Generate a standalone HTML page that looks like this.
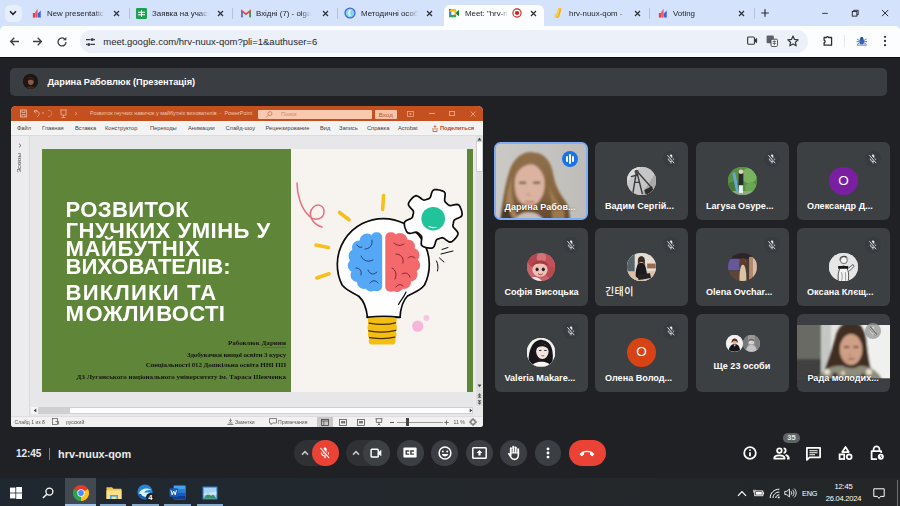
<!DOCTYPE html>
<html lang="uk">
<head>
<meta charset="utf-8">
<title>Meet</title>
<style>
*{box-sizing:border-box;margin:0;padding:0}
html,body{width:900px;height:506px;overflow:hidden;background:#202124;font-family:"Liberation Sans","Noto Sans CJK KR",sans-serif}
body{position:relative}
.a{position:absolute}
svg{position:absolute;overflow:visible}
#tabs{left:0;top:0;width:900px;height:32px;background:#d5e2fb}
#toolbar{left:0;top:26px;width:900px;height:31px;background:#fcfdfe;border-radius:5px 5px 0 0}
#omni{left:80px;top:30px;width:728px;height:23px;border-radius:12px;background:#ebf0f9}
.tt{position:absolute;top:7.7px;height:12px;font-size:7.9px;-webkit-mask-image:linear-gradient(90deg,#000 82%,transparent 100%);color:#22262c;line-height:12px;white-space:nowrap;overflow:hidden}
.tx{position:absolute;top:8.6px;width:9px;height:9px}
.sep{position:absolute;top:8px;width:1px;height:11px;background:#b5c3dd}
#activetab{left:444px;top:4.5px;width:100px;height:22.5px;background:#fcfdfe;border-radius:6px 6px 0 0}
#meet{left:0;top:57px;width:900px;height:421px;background:#202124}
#pbar{left:10px;top:68px;width:877px;height:28px;border-radius:5px;background:#3a3d41;color:#fff;font-size:9.25px;font-weight:bold;line-height:28px}
.tile{position:absolute;width:93px;height:78px;border-radius:6px;background:#3c4043;overflow:hidden}
.nm{position:absolute;left:10px;top:58px;color:#fff;font-size:9.1px;font-weight:bold;white-space:nowrap;line-height:12px}
.av{position:absolute;left:32.2px;top:24.5px;width:28.8px;height:28.8px;border-radius:50%;overflow:hidden}
.mic{position:absolute;left:68px;top:9px;width:16px;height:16px;border-radius:50%;background:#383b3f}
#taskbar{left:0;top:477.5px;width:900px;height:29px;background:linear-gradient(90deg,#1f2730 0,#21282f 25%,#23282c 50%,#242628 100%)}
.btn{position:absolute;top:440px;width:26px;height:26px;border-radius:13px;background:#3b3e42}
.pm{position:absolute;top:122px;font-size:5.7px;color:#3d3d3d;line-height:12px;white-space:nowrap}
.st{position:absolute;top:416px;font-size:5.1px;color:#555;line-height:11px;white-space:nowrap}
.tl{position:absolute;left:67px;color:#fff;font-weight:bold;font-size:22.1px;line-height:22px;white-space:nowrap;transform-origin:0 0}
.sub{position:absolute;right:0;font-family:"Liberation Serif",serif;font-weight:bold;font-size:7px;color:#15170f;line-height:10px;white-space:nowrap;text-align:right}
</style>
</head>
<body>
<!-- ===== Chrome tab strip ===== -->
<div class="a" id="tabs"></div>
<div class="a" id="activetab"></div>
<div class="a" id="toolbar"></div>
<div class="a" id="omni"></div>
<!--TABS-BEGIN-->
<!-- chevron search-tabs button -->
<div class="a" style="left:4.5px;top:4.5px;width:17.5px;height:17px;border-radius:5.5px;background:#e7eefc"></div>
<svg style="left:9.3px;top:10.3px" width="8" height="6" viewBox="0 0 8 6"><path d="M1 1.2 L4 4.3 L7 1.2" fill="none" stroke="#1f2329" stroke-width="1.5"/></svg>
<!-- tab 1 -->
<svg style="left:31.5px;top:8.2px" width="10" height="10" viewBox="0 0 11 12"><rect x="0.5" y="6" width="2.6" height="5.5" fill="#e8443a"/><path d="M3.3 11.5 L3.3 5 L6.2 0.5 L6.2 11.5Z" fill="#f0566b"/><path d="M6.4 11.5 L6.4 6.5 L10 3 L10 11.5Z" fill="#3a63e0"/></svg>
<div class="tt" style="left:47px;width:58px">New presentatic</div>
<svg class="tx" style="left:112px" viewBox="0 0 9 9"><path d="M2 2 L7 7 M7 2 L2 7" stroke="#2b2f36" stroke-width="1.2"/></svg>
<div class="sep" style="left:129px"></div>
<!-- tab 2 -->
<svg style="left:136px;top:8px" width="11" height="11" viewBox="0 0 11 11"><rect width="11" height="11" rx="1.3" fill="#1ea152"/><path d="M2 4.2 H9 M2 6.8 H9 M5.5 2 V9" stroke="#fff" stroke-width="1.1"/></svg>
<div class="tt" style="left:152px;width:57px">Заявка на участ</div>
<svg class="tx" style="left:216px" viewBox="0 0 9 9"><path d="M2 2 L7 7 M7 2 L2 7" stroke="#2b2f36" stroke-width="1.2"/></svg>
<div class="sep" style="left:232px"></div>
<!-- tab 3 gmail -->
<svg style="left:240.6px;top:9.6px" width="10" height="7.6" viewBox="0 0 11 9"><path d="M0.6 8.5 V1 L5.5 5 L10.4 1 V8.5" fill="none" stroke="#e5433b" stroke-width="1.9"/><path d="M0.6 8.5 V2.5" stroke="#3f7de8" stroke-width="1.9"/><path d="M10.4 8.5 V2.5" stroke="#2fa24f" stroke-width="1.9"/></svg>
<div class="tt" style="left:256px;width:55px">Вхідні (7) - olga</div>
<svg class="tx" style="left:320.5px" viewBox="0 0 9 9"><path d="M2 2 L7 7 M7 2 L2 7" stroke="#2b2f36" stroke-width="1.2"/></svg>
<div class="sep" style="left:337px"></div>
<!-- tab 4 -->
<svg style="left:344px;top:7px" width="12" height="12" viewBox="0 0 12 12"><circle cx="6" cy="6" r="5.6" fill="#4a63e6"/><circle cx="6" cy="6" r="4.3" fill="#7fd8ee"/><path d="M6.8 3.2 C4.5 3.6 4 7.8 6.6 8.6" fill="none" stroke="#fff" stroke-width="1.4"/></svg>
<div class="tt" style="left:361px;width:57px">Методичні особ</div>
<svg class="tx" style="left:424.5px" viewBox="0 0 9 9"><path d="M2 2 L7 7 M7 2 L2 7" stroke="#2b2f36" stroke-width="1.2"/></svg>
<!-- active tab 5 -->
<svg style="left:449.3px;top:8.9px" width="10" height="8.4" viewBox="0 0 12 10"><rect x="0" y="0" width="8.6" height="10" rx="1.4" fill="#fbbc04"/><path d="M0 3 L3 0 H0Z" fill="#ea4335"/><rect x="0" y="3" width="3" height="4.5" fill="#4285f4"/><rect x="0" y="7" width="8.6" height="3" rx="1" fill="#34a853"/><rect x="3" y="3" width="3.6" height="4" fill="#fff"/><path d="M8.6 4 L12 1.2 V8.8 L8.6 6Z" fill="#188038"/></svg>
<div class="tt" style="left:465px;width:43px">Meet: "hrv-n</div>
<svg style="left:512px;top:8px" width="10" height="10" viewBox="0 0 10 10"><circle cx="5" cy="5" r="4.1" fill="none" stroke="#c5221f" stroke-width="1.1"/><circle cx="5" cy="5" r="2.1" fill="#c5221f"/></svg>
<svg class="tx" style="left:528.5px" viewBox="0 0 9 9"><path d="M2 2 L7 7 M7 2 L2 7" stroke="#2b2f36" stroke-width="1.2"/></svg>
<!-- tab 6 -->
<svg style="left:553px;top:7px" width="10" height="12" viewBox="0 0 10 12"><path d="M5.2 0.8 L8.6 1.6 L6.4 9.5 C5.6 11.8 1.2 11.2 1.6 8.6 C1.8 6.8 4 6.6 4.4 6.6Z" fill="#f4b31a"/><path d="M5.2 0.8 L6.8 1.2 L5 8.8 C4.4 10.2 2.2 10.2 1.7 9.2 C1.6 7 4 6.6 4.4 6.6Z" fill="#f9cf4a"/></svg>
<div class="tt" style="left:569px;width:58px">hrv-nuux-qom -</div>
<svg class="tx" style="left:632.5px" viewBox="0 0 9 9"><path d="M2 2 L7 7 M7 2 L2 7" stroke="#2b2f36" stroke-width="1.2"/></svg>
<div class="sep" style="left:649px"></div>
<!-- tab 7 -->
<svg style="left:657.5px;top:8.2px" width="10" height="10" viewBox="0 0 11 12"><rect x="0.5" y="6" width="2.6" height="5.5" fill="#e8443a"/><path d="M3.3 11.5 L3.3 5 L6.2 0.5 L6.2 11.5Z" fill="#f0566b"/><path d="M6.4 11.5 L6.4 6.5 L10 3 L10 11.5Z" fill="#3a63e0"/></svg>
<div class="tt" style="left:673px;width:40px">Voting</div>
<svg class="tx" style="left:736.5px" viewBox="0 0 9 9"><path d="M2 2 L7 7 M7 2 L2 7" stroke="#2b2f36" stroke-width="1.2"/></svg>
<div class="sep" style="left:753.5px"></div>
<svg style="left:760px;top:8px" width="10" height="10" viewBox="0 0 10 10"><path d="M5 1.2 V8.8 M1.2 5 H8.8" stroke="#2b2f36" stroke-width="1.2"/></svg>
<!-- window controls -->
<svg style="left:821px;top:9px" width="8" height="8" viewBox="0 0 10 10"><path d="M1.5 5.5 H8.5" stroke="#23272d" stroke-width="1.1"/></svg>
<svg style="left:850.6px;top:8.6px" width="8.4" height="8.4" viewBox="0 0 10 10"><rect x="1.5" y="3" width="5.5" height="5.5" fill="none" stroke="#23272d" stroke-width="1.1"/><path d="M3.2 3 V1.5 H8.6 V6.8 H7" fill="none" stroke="#23272d" stroke-width="1.1"/></svg>
<svg style="left:880.8px;top:9px" width="8.2" height="8.2" viewBox="0 0 10 10"><path d="M1.3 1.3 L8.7 8.7 M8.7 1.3 L1.3 8.7" stroke="#23272d" stroke-width="1.2"/></svg>
<!-- toolbar nav -->
<svg style="left:9px;top:36px" width="11" height="11" viewBox="0 0 11 11"><path d="M10 5.5 H1.8 M5.3 1.8 L1.6 5.5 L5.3 9.2" fill="none" stroke="#3b3f45" stroke-width="1.3"/></svg>
<svg style="left:32px;top:36px" width="11" height="11" viewBox="0 0 11 11"><path d="M1 5.5 H9.2 M5.7 1.8 L9.4 5.5 L5.7 9.2" fill="none" stroke="#3b3f45" stroke-width="1.3"/></svg>
<svg style="left:56px;top:35.5px" width="12" height="12" viewBox="0 0 12 12"><path d="M10 6 A4 4 0 1 1 8.6 2.9" fill="none" stroke="#3b3f45" stroke-width="1.3"/><path d="M10.3 1 V4.3 H7Z" fill="#3b3f45"/></svg>
<svg style="left:85px;top:36.5px" width="11" height="10" viewBox="0 0 11 10"><path d="M1 2.6 H5.5 M8.6 2.6 H10 M1 7.4 H2.4 M5.5 7.4 H10" stroke="#3b3f45" stroke-width="1.3"/><circle cx="7.2" cy="2.6" r="1.5" fill="#3b3f45"/><circle cx="3.8" cy="7.4" r="1.5" fill="#3b3f45"/></svg>
<div class="a" style="left:103.3px;top:33.7px;font-size:9.5px;color:#24272c;line-height:15px;white-space:nowrap;letter-spacing:0px" id="url">meet.google.com/hrv-nuux-qom?pli=1&amp;authuser=6</div>
<!-- omnibox right icons -->
<svg style="left:746.5px;top:36.4px" width="11" height="9.2" viewBox="0 0 12 10"><rect x="0.7" y="1" width="7.4" height="8" rx="1.2" fill="none" stroke="#33373d" stroke-width="1.2"/><path d="M8.2 4 L11 2 V8 L8.2 6Z" fill="#33373d"/></svg>
<svg style="left:766px;top:35px" width="12" height="12" viewBox="0 0 12 12"><rect x="0.6" y="0.6" width="7.2" height="7.6" rx="1" fill="#5b6068"/><rect x="5" y="4.2" width="6.4" height="7.2" rx="1" fill="#fff" stroke="#444a52" stroke-width="1"/><path d="M6.6 6.4 H10 M6.6 8.4 H10 M8.3 5.5 V10" stroke="#444a52" stroke-width=".8"/></svg>
<svg style="left:787px;top:35px" width="12" height="12" viewBox="0 0 12 12"><path d="M6 1 L7.5 4.4 L11.2 4.8 L8.4 7.2 L9.2 10.8 L6 8.9 L2.8 10.8 L3.6 7.2 L0.8 4.8 L4.5 4.4Z" fill="none" stroke="#33373d" stroke-width="1.2" stroke-linejoin="round"/></svg>
<svg style="left:821.5px;top:35.3px" width="11.5" height="11.5" viewBox="0 0 12 12"><path d="M2.2 2.6 H4.6 C4.6 1.4 7 1.4 7 2.6 H10 V10.6 H2.2 V8 C3.6 8 3.6 5.6 2.2 5.6Z" fill="none" stroke="#2b2f35" stroke-width="1.35" stroke-linejoin="round"/></svg>
<div class="a" style="left:844px;top:35px;width:1px;height:12px;background:#e1e6ef"></div>
<svg style="left:855.5px;top:36px" width="11.5" height="10" viewBox="0 0 14 12"><ellipse cx="7" cy="6.6" rx="3" ry="3.6" fill="#3a63b8"/><circle cx="7" cy="2.8" r="1.9" fill="#2c4f9e"/><path d="M1 3.5 L4.4 5.4 M13 3.5 L9.6 5.4 M1.2 10.2 L4.4 8 M12.8 10.2 L9.6 8 M0.6 6.8 H4 M13.4 6.8 H10" stroke="#4a74c9" stroke-width="1.1"/><path d="M1 11 H13" stroke="#3a63b8" stroke-width="1"/></svg>
<svg style="left:883px;top:35px" width="4" height="12" viewBox="0 0 4 12"><circle cx="2" cy="1.8" r="1.15" fill="#33373d"/><circle cx="2" cy="6" r="1.15" fill="#33373d"/><circle cx="2" cy="10.2" r="1.15" fill="#33373d"/></svg>
<!--TABS-END-->
<!-- ===== Meet ===== -->
<div class="a" id="meet"></div>
<div class="a" style="left:0;top:56.6px;width:900px;height:1.6px;background:#0b0b0c"></div>
<div class="a" id="pbar"><div class="a" style="left:12.5px;top:6.3px;width:15px;height:15px;border-radius:50%;overflow:hidden;background:#1b1512"><svg width="15" height="15" viewBox="0 0 16.5 16.5" style="left:0;top:0"><rect width="16.5" height="16.5" fill="#1d1613"/><ellipse cx="8.6" cy="8" rx="3.2" ry="4.2" fill="#8a5a45"/><path d="M4.6 9 C4 2 13 2 12.4 9 C11.4 5.4 5.8 5.4 4.6 9Z" fill="#2a1a14"/><path d="M3 16.5 C4 12.5 13 12.5 14 16.5Z" fill="#3a2a24"/></svg></div><span class="a" style="left:37.5px;top:0">Дарина Рабовлюк (Презентація)</span></div>
<!--PPT-BEGIN-->
<div class="a" id="ppt" style="left:10.5px;top:106px;width:472.5px;height:321px;border-radius:5px 5px 3px 3px;background:#e7e7e9;overflow:hidden"><div class="a" style="left:0;top:0;width:472.5px;height:321px;filter:blur(.35px)">
  <!-- title bar -->
  <div class="a" style="left:0;top:0;width:473px;height:14.5px;background:#c4501f"></div>
  <svg style="left:9px;top:3px" width="60" height="9" viewBox="0 0 60 9" fill="none" stroke="#eab299" stroke-width="0.85"><rect x="0.5" y="1" width="6" height="7"/><path d="M2 1 V3.5 H5 V1 M2 8 V5.5 H5 V8"/><path d="M14 2 L16 4.5 M14 2 L17 1.6 M14 2 C19 1 21 5 17 8"/><path d="M22 4 H24"/><path d="M28 1.5 C33 0.5 33 8 28 7.5" stroke="#d98763"/><path d="M40 1 H47 M41 1.5 V6 H46 V1.5 M43.5 6 V8 M41.5 8.5 H45.5"/><path d="M55 3 L57 4.5 L55 6" stroke="#e4a282"/></svg>
  <div class="a" style="left:79.5px;top:1.5px;font-size:5.45px;line-height:11px;color:#efc4ae;white-space:nowrap" id="ptitle">Розвиток гнучких навичок у майбутніх вихователів&nbsp; -&nbsp; PowerPoint</div>
  <div class="a" style="left:247.5px;top:3.5px;width:113.5px;height:9px;background:#f9c9b0;border-radius:1px"></div>
  <svg style="left:254px;top:5px" width="8" height="7" viewBox="0 0 8 7"><circle cx="5" cy="2.6" r="2" fill="none" stroke="#c57a5a" stroke-width=".8"/><path d="M3.5 4 L0.8 6.5" stroke="#c57a5a" stroke-width=".8"/></svg>
  <div class="a" style="left:270.5px;top:2.5px;font-size:5.6px;line-height:11px;color:#cf8a6c">Поиск</div>
  <div class="a" style="left:364.5px;top:3.5px;width:21.5px;height:9px;background:#f6c3a8;border-radius:1px;font-size:6.2px;line-height:9px;color:#b85a34;text-align:center">Вход</div>
  <svg style="left:396px;top:4.7px" width="7" height="6" viewBox="0 0 7 6"><rect x="0.5" y="0.5" width="6" height="5" fill="none" stroke="#e9a98b" stroke-width=".8"/><path d="M2 3 H5 M3.5 1.8 V4.2" stroke="#e9a98b" stroke-width=".7"/></svg>
  <div class="a" style="left:418.5px;top:7.3px;width:5.5px;height:.9px;background:#e6a283"></div>
  <div class="a" style="left:438.8px;top:5px;width:5.6px;height:5px;border:.8px solid #e6a283"></div>
  <svg style="left:459.8px;top:4.7px" width="6" height="6" viewBox="0 0 6 6"><path d="M0.5 0.5 L5.5 5.5 M5.5 0.5 L0.5 5.5" stroke="#ecb096" stroke-width=".8"/></svg>
  <!-- menu bar -->
  <div class="a" style="left:0;top:14.5px;width:473px;height:15px;background:#f4f3f3;border-bottom:1px solid #dcdcdc"></div>
  <div class="pm" style="left:6.5px;top:16.1px">Файл</div>
  <div class="pm" style="left:31.5px;top:16.1px">Главная</div>
  <div class="pm" style="left:64.5px;top:16.1px">Вставка</div>
  <div class="pm" style="left:94.5px;top:16.1px">Конструктор</div>
  <div class="pm" style="left:139.5px;top:16.1px">Переходы</div>
  <div class="pm" style="left:177.5px;top:16.1px">Анимации</div>
  <div class="pm" style="left:215px;top:16.1px">Слайд-шоу</div>
  <div class="pm" style="left:255px;top:16.1px">Рецензирование</div>
  <div class="pm" style="left:309.5px;top:16.1px">Вид</div>
  <div class="pm" style="left:328.5px;top:16.1px">Запись</div>
  <div class="pm" style="left:356.5px;top:16.1px">Справка</div>
  <div class="pm" style="left:387.5px;top:16.1px">Acrobat</div>
  <svg style="left:421.5px;top:19px" width="6" height="7" viewBox="0 0 6 7"><path d="M1 3 V6.5 H5 V3 M3 4.5 V0.8 M1.6 2 L3 0.6 L4.4 2" fill="none" stroke="#c0522c" stroke-width=".8"/></svg>
  <div class="pm" style="left:429.5px;top:16.1px;color:#b7472a;font-weight:bold">Поделиться</div>
  <!-- left thumbnail pane -->
  <div class="a" style="left:0;top:30px;width:19.5px;height:280px;background:#ecebee;border-right:1px solid #dcdbde"></div>
  <svg style="left:7px;top:37px" width="4" height="5" viewBox="0 0 4 5"><path d="M1 0.7 L3 2.5 L1 4.3" fill="none" stroke="#555" stroke-width=".8"/></svg>
  <div class="a" style="left:-3.5px;top:51px;width:24px;height:12px;font-size:5.8px;line-height:12px;color:#444;text-align:center;transform:rotate(-90deg);white-space:nowrap">Эскизы</div>
  <!-- slide -->
  <div class="a" id="slide" style="left:31.5px;top:43.1px;width:431px;height:242.7px;background:#5f8638;overflow:hidden">
    <div class="a" style="left:248.5px;top:0;width:176px;height:243px;background:#f7f4f0"></div>
    <div class="tl" id="l1" style="left:23.6px;top:50.4px;letter-spacing:.32px">РОЗВИТОК</div>
    <div class="tl" id="l2" style="left:23.6px;top:70.6px;letter-spacing:.48px">ГНУЧКИХ УМІНЬ У</div>
    <div class="tl" id="l3" style="left:23.6px;top:88.7px;letter-spacing:.56px">МАЙБУТНІХ</div>
    <div class="tl" id="l4" style="left:23.6px;top:107.3px;letter-spacing:-.1px">ВИХОВАТЕЛІВ:</div>
    <div class="tl" id="l5" style="left:23.6px;top:132.5px;letter-spacing:1.15px">ВИКЛИКИ ТА</div>
    <div class="tl" id="l6" style="left:23.6px;top:153.5px;letter-spacing:.3px">М<span style="margin-left:1.2px">ОЖЛИ</span><span style="margin-left:1.2px">ВОСТІ</span></div>
    <div class="sub" style="right:187px;top:189.4px;letter-spacing:.03px"><span style="text-decoration:none">Рабовлюк <span style="border-bottom:.6px solid #c0392b">Дарини</span></span></div>
    <div class="sub" style="right:187px;top:201.2px;letter-spacing:-.15px">Здобувачки вищої освіти 3 курсу</div>
    <div class="sub" style="right:187px;top:211.2px;letter-spacing:-.09px">Спеціальності 012 Дошкільна освіта ННІ ПП</div>
    <div class="sub" style="right:187px;top:223.2px">ДЗ Луганського національного університету ім. Тараса Шевченка</div>
    <!--ART-BEGIN-->
<svg style="left:-42px;top:-149.1px" width="480" height="400" viewBox="0 0 480 400" fill="none" stroke-linecap="round" stroke-linejoin="round">
<path d="M297 183 C297 195 301 208 309 216 C315 222 324 219 324 211.5 C324 205 317 203 313 207.5 C307 214 312 224 322 227" stroke="#ea6f7c" stroke-width="1.5"/>
<path d="M383.6 195.5 L382.6 209.5" stroke="#f6bf1c" stroke-width="3.6"/>
<path d="M339.5 212.5 L349 219.8" stroke="#f6bf1c" stroke-width="3.6"/>
<path d="M316 245 L328.5 247.6" stroke="#f6bf1c" stroke-width="3.6"/>
<path d="M316.8 278 L329 273.8" stroke="#f6bf1c" stroke-width="3.6"/>
<path d="M367.5 317.5 C366.5 308 364 301 359 296.5 C355 293 348 292 342.1 285 A46 46 0 1 1 424.5 285 C419 292 412 293 407.5 296 C402.5 301 400.5 308 400 317.5 Z" fill="#fff" stroke="#0c0c0c" stroke-width="1.7"/>
<g fill="#55a8f6"><rect x="371" y="232.3" width="11.2" height="59" rx="5"/><circle cx="367" cy="241" r="7.5"/><circle cx="359" cy="247.5" r="7"/><circle cx="355.5" cy="256" r="7"/><circle cx="355" cy="265.5" r="7.2"/><circle cx="357.5" cy="275" r="7"/><circle cx="364" cy="282" r="7"/><circle cx="371" cy="285" r="6.5"/><rect x="358" y="245" width="20" height="38"/></g>
<g fill="#f4696b"><rect x="385.3" y="232.3" width="11.2" height="59.5" rx="5"/><circle cx="400" cy="240.5" r="7.5"/><circle cx="408" cy="246.5" r="7"/><circle cx="412.5" cy="255" r="7"/><circle cx="413" cy="265" r="7.2"/><circle cx="410.5" cy="274.5" r="7"/><circle cx="404" cy="282" r="7"/><circle cx="397" cy="285.5" r="6.5"/><rect x="390" y="245" width="20" height="38"/></g>
<g stroke="#22356b" stroke-width="0.9"><path d="M372 240 C373 246 369 249 365 249"/><path d="M361 256 C364 262 369 262 373 260"/><path d="M356 268 C360 268 362 271 361 275"/><path d="M368 270 C370 275 374 275 377 272"/><path d="M370 283 C372 280 376 280 378 283"/><path d="M357 245 C358 247 360 248 362 247"/></g>
<g stroke="#7a1f28" stroke-width="0.9"><path d="M394 243 C397 246 401 246 404 244"/><path d="M396 254 C401 254 404 258 403 263"/><path d="M408 258 C410 256 413 256 415 258"/><path d="M392 268 C396 270 397 275 395 279"/><path d="M402 274 C405 272 409 273 410 277"/><path d="M396 287 C398 284 401 284 403 286"/></g>
<path d="M406 292 C404 297 401 300 398.5 304.5" stroke="#0c0c0c" stroke-width="1.2"/>
<path d="M456.1 218.9 L454.8 219.7 L454.1 220.4 L453.8 221.1 L453.6 221.8 L453.5 222.5 L453.3 223.2 L453.2 223.9 L453.0 224.6 L452.9 225.3 L452.9 226.1 L453.2 227.0 L454.2 228.2 L455.8 229.9 L457.4 231.8 L458.0 233.2 L457.9 234.4 L457.6 235.3 L457.0 236.2 L456.4 237.1 L455.8 237.9 L455.1 238.6 L454.4 239.4 L453.7 240.1 L452.9 240.8 L452.1 241.4 L451.2 241.9 L450.0 242.1 L448.5 241.6 L446.5 240.3 L444.7 238.8 L443.3 238.0 L442.4 237.7 L441.6 237.8 L440.9 238.0 L440.2 238.2 L439.6 238.5 L438.9 238.7 L438.2 238.9 L437.5 239.2 L436.8 239.5 L436.2 240.3 L435.6 241.7 L435.0 244.0 L434.2 246.3 L433.2 247.5 L432.2 248.1 L431.2 248.2 L430.1 248.2 L429.1 248.1 L428.1 247.9 L427.1 247.8 L426.1 247.5 L425.1 247.2 L424.1 246.9 L423.2 246.5 L422.3 246.0 L421.5 245.1 L421.2 243.5 L421.4 241.1 L421.7 238.8 L421.8 237.2 L421.5 236.3 L421.0 235.7 L420.5 235.1 L420.0 234.7 L419.4 234.2 L418.9 233.7 L418.4 233.2 L417.8 232.8 L417.1 232.4 L416.2 232.2 L414.6 232.4 L412.3 233.0 L410.0 233.4 L408.4 233.2 L407.4 232.6 L406.8 231.8 L406.3 230.9 L405.9 229.9 L405.5 229.0 L405.1 228.0 L404.8 227.0 L404.6 226.0 L404.4 225.0 L404.3 224.0 L404.3 223.0 L404.7 221.9 L405.9 220.8 L408.0 219.8 L410.3 218.9 L411.6 218.1 L412.3 217.4 L412.6 216.7 L412.8 216.0 L412.9 215.3 L413.1 214.6 L413.2 213.9 L413.4 213.2 L413.5 212.5 L413.5 211.7 L413.2 210.8 L412.2 209.6 L410.6 207.9 L409.0 206.0 L408.4 204.6 L408.5 203.4 L408.8 202.5 L409.4 201.6 L410.0 200.7 L410.6 199.9 L411.3 199.2 L412.0 198.4 L412.7 197.7 L413.5 197.0 L414.3 196.4 L415.2 195.9 L416.4 195.7 L417.9 196.2 L419.9 197.5 L421.7 199.0 L423.1 199.8 L424.0 200.1 L424.8 200.0 L425.5 199.8 L426.2 199.6 L426.8 199.3 L427.5 199.1 L428.2 198.9 L428.9 198.6 L429.6 198.3 L430.2 197.5 L430.8 196.1 L431.4 193.8 L432.2 191.5 L433.2 190.3 L434.2 189.7 L435.2 189.6 L436.3 189.6 L437.3 189.7 L438.3 189.9 L439.3 190.0 L440.3 190.3 L441.3 190.6 L442.3 190.9 L443.2 191.3 L444.1 191.8 L444.9 192.7 L445.2 194.3 L445.0 196.7 L444.7 199.0 L444.6 200.6 L444.9 201.5 L445.4 202.1 L445.9 202.7 L446.4 203.1 L447.0 203.6 L447.5 204.1 L448.0 204.6 L448.6 205.0 L449.3 205.4 L450.2 205.6 L451.8 205.4 L454.1 204.8 L456.4 204.4 L458.0 204.6 L459.0 205.2 L459.6 206.0 L460.1 206.9 L460.5 207.9 L460.9 208.8 L461.3 209.8 L461.6 210.8 L461.8 211.8 L462.0 212.8 L462.1 213.8 L462.1 214.8 L461.7 215.9 L460.5 217.0 L458.4 218.0Z" fill="#fff" stroke="#0c0c0c" stroke-width="1.7"/>
<circle cx="433.2" cy="218.7" r="11.8" fill="#20c39a"/>
<path d="M429 226.5 C431 227.5 434 227.8 436 227.3" stroke="#e9fff8" stroke-width="1.1"/>
<g stroke="#0c0c0c" stroke-width="1"><path d="M442 249.5 L448 247.5"/><path d="M441 254 L453 251"/><path d="M439.5 258 L444 262"/><path d="M436.5 261 C438 264 438.5 268 437.5 271"/></g>
<g fill="#f4bd12" stroke="none"><rect x="368" y="317" width="28.6" height="7.4" rx="3"/><rect x="367.6" y="323.6" width="29.2" height="8" rx="3.2"/><rect x="368" y="330.8" width="28.4" height="7.6" rx="3.2"/><rect x="368.8" y="337.4" width="26.6" height="7.2" rx="3.4"/><rect x="369" y="320" width="26.4" height="21"/></g>
<g stroke="#4a3006" stroke-width="1.25"><path d="M369 323.2 C378 324.8 388 324.8 395.6 322.8"/><path d="M368.6 330.8 C378 332.4 388 332.4 395.8 330.4"/><path d="M369.6 337.6 C378 338.8 388 338.8 394.8 337.2"/></g>
<path d="M367 317.3 C378 316 390 316 400.3 317.3" stroke="#0c0c0c" stroke-width="1.6"/>
<circle cx="417.7" cy="326.2" r="5.6" fill="#f7b6d8"/>
<circle cx="426.4" cy="318" r="2.9" fill="#f9c4df"/>
</svg>
<!--ART-END-->
  </div>
  <!-- vertical scrollbar -->
  <div class="a" style="left:462.5px;top:30px;width:10px;height:280px;background:#e9e9ea"></div>
  <div class="a" style="left:465.5px;top:30px;width:7px;height:270px;background:#dfdfe0"></div>
  <div class="a" style="left:465.7px;top:35px;width:6.6px;height:31px;background:#fdfdfd;border:0.5px solid #cfcfcf"></div>
  <svg style="left:466.5px;top:31px" width="5" height="4" viewBox="0 0 5 4"><path d="M0.5 3.5 L2.5 0.8 L4.5 3.5Z" fill="#444"/></svg>
  <svg style="left:466.5px;top:277.5px" width="5" height="4" viewBox="0 0 5 4"><path d="M0.5 0.5 L2.5 3.2 L4.5 0.5Z" fill="#444"/></svg>
  <svg style="left:466.5px;top:286.5px" width="5" height="5" viewBox="0 0 5 5"><path d="M0.5 2.5 L2.5 0.3 L4.5 2.5Z M0.5 4.8 L2.5 2.6 L4.5 4.8Z" fill="#555"/></svg>
  <svg style="left:466.5px;top:293.5px" width="5" height="5" viewBox="0 0 5 5"><path d="M0.5 0.2 L2.5 2.4 L4.5 0.2Z M0.5 2.5 L2.5 4.7 L4.5 2.5Z" fill="#555"/></svg>
  <!-- horizontal scrollbar -->
  <div class="a" style="left:20.5px;top:300.5px;width:442px;height:7.5px;background:#fdfdfd;border:0.5px solid #d0d0d0"></div>
  <div class="a" style="left:20.5px;top:300.5px;width:39px;height:7.5px;background:#cfcfd1"></div>
  <div class="a" style="left:20.5px;top:300.5px;width:7px;height:7.5px;background:#f5f5f5"></div>
  <svg style="left:22.5px;top:302px" width="4" height="5" viewBox="0 0 4 5"><path d="M3.3 0.5 L0.7 2.5 L3.3 4.5Z" fill="#444"/></svg>
  <svg style="left:458.5px;top:302px" width="4" height="5" viewBox="0 0 4 5"><path d="M0.7 0.5 L3.3 2.5 L0.7 4.5Z" fill="#444"/></svg>
  <!-- status bar -->
  <div class="a" style="left:0;top:310px;width:473px;height:11px;background:#f2f1f1;border-top:1px solid #dedede"></div>
  <div class="st" style="left:4px;top:310.5px">Слайд 1 из 8</div>
  <svg style="left:41px;top:312px" width="7" height="7" viewBox="0 0 7 7"><rect x="0.5" y="0.5" width="5" height="6" fill="none" stroke="#555" stroke-width=".7"/><path d="M3.5 3.5 H6.5 V6.5" stroke="#555" stroke-width=".7" fill="none"/></svg>
  <div class="st" style="left:55.5px;top:310.5px">русский</div>
  <svg style="left:216px;top:312px" width="7" height="7" viewBox="0 0 7 7"><path d="M0.5 6.5 H6.5 M1.5 5 H5.5 M3.5 0.5 V3.5 M2.3 2.3 L3.5 3.6 L4.7 2.3" stroke="#555" stroke-width=".7" fill="none"/></svg>
  <div class="st" style="left:224.5px;top:310.5px">Заметки</div>
  <svg style="left:258.5px;top:312px" width="8" height="7" viewBox="0 0 8 7"><path d="M0.5 0.5 H7.5 V5 H3.5 L2 6.6 V5 H0.5Z" stroke="#555" stroke-width=".7" fill="none"/></svg>
  <div class="st" style="left:267.5px;top:310.5px">Примечания</div>
  <div class="a" style="left:306.5px;top:311px;width:16px;height:10px;background:#c9c8c8"></div>
  <svg style="left:310.5px;top:312.5px" width="8" height="7" viewBox="0 0 8 7"><rect x="0.5" y="0.5" width="7" height="6" fill="none" stroke="#444" stroke-width=".8"/><path d="M0.5 2 H7.5 M2.8 2 V6.5" stroke="#444" stroke-width=".7"/></svg>
  <svg style="left:328.5px;top:312.5px" width="8" height="7" viewBox="0 0 8 7"><rect x="0.5" y="0.5" width="7" height="6" fill="none" stroke="#555" stroke-width=".8"/><path d="M2.5 2.5 H3.7 V3.5 H2.5Z M4.6 2.5 H5.8 V3.5 H4.6Z M2.5 4.3 H3.7 M4.6 4.3 H5.8" stroke="#555" stroke-width=".7"/></svg>
  <svg style="left:346.5px;top:312.5px" width="8" height="7" viewBox="0 0 8 7"><rect x="0.5" y="0.5" width="7" height="6" fill="none" stroke="#555" stroke-width=".8"/><rect x="2" y="2" width="4" height="2.4" fill="#777"/></svg>
  <svg style="left:364.5px;top:312px" width="8" height="8" viewBox="0 0 8 8"><path d="M0.5 0.7 H7.5 M1.3 0.7 V4.4 H6.7 V0.7 M4 4.4 V6.6 M2.6 7.4 L4 6 L5.4 7.4" fill="none" stroke="#555" stroke-width=".8"/></svg>
  <div class="a" style="left:379.5px;top:315.5px;width:4px;height:.8px;background:#555"></div>
  <div class="a" style="left:386px;top:315.6px;width:46px;height:.7px;background:#9a9a9a"></div>
  <div class="a" style="left:395.8px;top:312px;width:2.4px;height:7.5px;background:#444"></div>
  <svg style="left:433px;top:313.5px" width="5" height="5" viewBox="0 0 5 5"><path d="M0.3 2.5 H4.7 M2.5 0.3 V4.7" stroke="#555" stroke-width=".8"/></svg>
  <div class="st" style="left:443px;top:310.5px">11 %</div>
  <svg style="left:458.5px;top:312px" width="8" height="8" viewBox="0 0 8 8"><rect x="2" y="2" width="4" height="4" fill="none" stroke="#444" stroke-width=".8"/><path d="M4 0 V2 M4 6 V8 M0 4 H2 M6 4 H8" stroke="#444" stroke-width=".8"/></svg>
</div></div>
<!--PPT-END-->
<!--TILES-BEGIN-->
<svg style="left:0;top:0" width="0" height="0"><defs><g id="micoff"><path d="M8 3.6 C7.2 3.6 6.7 4.2 6.7 4.9 V7.9 C6.7 8.7 7.2 9.2 8 9.2 C8.8 9.2 9.3 8.7 9.3 7.9 V4.9 C9.3 4.2 8.8 3.6 8 3.6Z" fill="#e8eaed"/><path d="M5.3 7.7 C5.3 9.4 6.5 10.5 8 10.5 C9.5 10.5 10.7 9.4 10.7 7.7 M8 10.5 V12.4" fill="none" stroke="#e8eaed" stroke-width=".9"/><path d="M4.6 3.8 L11.6 12" stroke="#383b3f" stroke-width="2.2"/><path d="M4.4 4.2 L11.2 12.2" stroke="#e8eaed" stroke-width=".9"/></g></defs></svg>
<!-- row 1 -->
<div class="tile" style="left:494.3px;top:142.3px;width:93.4px;height:77.6px;background:#c6c4c1;border:2px solid #80aef6;border-radius:6.5px">
  <svg style="left:-2px;top:-2px" width="93.4" height="77.6" viewBox="0 0 93 77"><defs><linearGradient id="bg1" x1="0" y1="0" x2="1" y2="0"><stop offset="0" stop-color="#cbc9c6"/><stop offset=".6" stop-color="#c5c3c0"/><stop offset="1" stop-color="#bebcb9"/></linearGradient><linearGradient id="hr1" x1="0" y1="0" x2="0" y2="1"><stop offset="0" stop-color="#8e6f4b"/><stop offset=".6" stop-color="#86653f"/><stop offset="1" stop-color="#5e452c"/></linearGradient><filter id="bl1"><feGaussianBlur stdDeviation="1.1"/></filter></defs><rect width="93" height="77" fill="url(#bg1)"/><g filter="url(#bl1)"><path d="M6 80 C8 60 11 42 15 30 C19 15 30 9 38 10 C50 10 57 19 59 32 C61 44 66 52 72 60 C75 66 76 72 75 80Z" fill="url(#hr1)"/><path d="M10 77 C12 60 13 46 18 34 C16 50 20 66 24 77Z" fill="#a5825a"/><path d="M54 42 C58 52 64 60 70 68 L70 77 H58 C58 64 56 52 54 42Z" fill="#9a794f"/><ellipse cx="35.5" cy="42" rx="15" ry="21.5" fill="#dcb3a0"/><path d="M20 46 C21 56 26 62 32 64 C26 60 22 54 20 46Z" fill="#c99c88"/><path d="M19 40 C19 20 34 14 38 16 C46 16 52 26 52 40 C48 28 42 22 37 22 C30 22 22 28 19 40Z" fill="#8f6e49"/><path d="M25 40.5 H32 M39 40.5 H46" stroke="#5e483f" stroke-width="2"/><path d="M34 50 L33 53 H37" stroke="#c4937f" stroke-width="1" fill="none"/><path d="M31 59.5 H40" stroke="#b06f68" stroke-width="1.8"/><path d="M20 80 C22 67 46 66 50 80Z" fill="#cbbdb0"/><path d="M6 80 C7 72 10 66 14 62 C15 70 18 76 22 80Z" fill="#4a3826"/></g></svg>
  <div class="a" style="left:65.8px;top:6.6px;width:16.4px;height:16.4px;border-radius:50%;background:#1a73e8"></div>
  <div class="a" style="left:69.9px;top:12px;width:2.2px;height:5.6px;border-radius:1px;background:#fff"></div>
  <div class="a" style="left:72.9px;top:10.1px;width:2.2px;height:9.4px;border-radius:1px;background:#fff"></div>
  <div class="a" style="left:75.9px;top:12px;width:2.2px;height:5.6px;border-radius:1px;background:#fff"></div>
  <div class="nm" style="left:8.2px;top:57.2px;text-shadow:0 0 2px rgba(0,0,0,.6)">Дарина Рабов...</div>
</div>
<div class="tile" style="left:595px;top:142px"><div class="mic"></div><svg class="mi" style="left:68px;top:9px" width="16" height="16" viewBox="0 0 16 16"><use href="#micoff"/></svg>
  <div class="av" style="background:#c4c4c4"><svg width="28.8" height="28.8" viewBox="0 0 30 30" style="left:0;top:0"><rect width="30" height="30" fill="#c6c6c6"/><path d="M30 6 L14 30 H30Z" fill="#a9a9a9"/><path d="M0 0 H14 L0 16Z" fill="#dcdcdc"/><path d="M10 4 L6 28 M10 4 L16 28 M10 4 L26 22 M7.5 16 H13 M4 10 L12 8" stroke="#3c3c3c" stroke-width="1.5" fill="none"/><circle cx="10" cy="5" r="2.2" fill="#4a4a4a"/><path d="M18 24 L26 20 L28 26 L20 30Z" fill="#2e2e2e"/></svg></div>
  <div class="nm">Вадим Сергій...</div></div>
<div class="tile" style="left:696px;top:142px"><div class="mic"></div><svg class="mi" style="left:68px;top:9px" width="16" height="16" viewBox="0 0 16 16"><use href="#micoff"/></svg>
  <div class="av" style="background:#5c8f45"><svg width="28.8" height="28.8" viewBox="0 0 30 30" style="left:0;top:0"><rect width="30" height="30" fill="#579145"/><circle cx="22" cy="9" r="8" fill="#79b361"/><circle cx="24" cy="22" r="6" fill="#6aa753"/><circle cx="6" cy="22" r="7" fill="#467a3a"/><rect x="0" y="25" width="30" height="5" fill="#8fa889"/><path d="M6 6 L10 26" stroke="#67a7d8" stroke-width="3"/><rect x="11" y="5" width="5" height="15" rx="2" fill="#2a2a2e"/><circle cx="13.5" cy="5" r="2.4" fill="#e8cdb8"/><rect x="11.5" y="19" width="4" height="8" fill="#f2f2f2"/></svg></div>
  <div class="nm">Laгysa Osype...</div></div>
<div class="tile" style="left:797px;top:142px"><div class="mic"></div><svg class="mi" style="left:68px;top:9px" width="16" height="16" viewBox="0 0 16 16"><use href="#micoff"/></svg>
  <div class="av" style="background:#7b1fa2;color:#fff;font-size:13.5px;line-height:28.8px;text-align:center">О</div>
  <div class="nm">Олександр Д...</div></div>
<!-- row 2 -->
<div class="tile" style="left:494.5px;top:228px"><div class="mic"></div><svg class="mi" style="left:68px;top:9px" width="16" height="16" viewBox="0 0 16 16"><use href="#micoff"/></svg>
  <div class="av" style="background:#c75a60"><svg width="28.8" height="28.8" viewBox="0 0 30 30" style="left:0;top:0"><rect width="30" height="30" fill="#c9626a"/><circle cx="8" cy="8" r="7" fill="#b3454e"/><circle cx="23" cy="9" r="7.5" fill="#c2525a"/><circle cx="25" cy="20" r="6" fill="#b84a53"/><circle cx="15" cy="5" r="5" fill="#d4737a"/><ellipse cx="13.5" cy="17.5" rx="8" ry="7.2" fill="#efc0b6"/><path d="M5 13 C9 6 20 6 23 14 C18 10 10 10 5 13Z" fill="#a83a44"/><ellipse cx="10.5" cy="17" rx="1.6" ry="2" fill="#2e2024"/><ellipse cx="17" cy="17" rx="1.6" ry="2" fill="#2e2024"/><path d="M11.5 21.5 C13 23 15 23 16.5 21.5" stroke="#8a2e38" stroke-width=".9" fill="none"/><path d="M0 30 C2 24 12 23 16 30Z" fill="#ece6e4"/></svg></div>
  <div class="nm">Софія Висоцька</div></div>
<div class="tile" style="left:595px;top:228px"><div class="mic"></div><svg class="mi" style="left:68px;top:9px" width="16" height="16" viewBox="0 0 16 16"><use href="#micoff"/></svg>
  <div class="av" style="background:#ddd5cc"><svg width="28.8" height="28.8" viewBox="0 0 30 30" style="left:0;top:0"><rect width="30" height="30" fill="#e4ddd5"/><rect x="0" y="0" width="8" height="20" fill="#55626a"/><rect x="21" y="11" width="9" height="5" fill="#9a6a4a"/><rect x="0" y="19" width="30" height="11" fill="#dcc0a8"/><path d="M9 24 C9 14 11.5 10 15 10 C18.5 10 20 14 21 24 C22 28 12 29 9 24Z" fill="#1b1a1e"/><path d="M11 22 L24 21 L25 26 L12 28Z" fill="#222126"/><circle cx="15" cy="7.2" r="3" fill="#e2c2ae"/><path d="M11.4 9 C10.6 1.6 19.4 1.6 18.6 9 L19 13 C18 8 12 8 11 13Z" fill="#3a2a22"/></svg></div>
  <div class="nm" style="font-size:10px;top:57.5px;font-weight:500;letter-spacing:.4px">긴태이</div></div>
<div class="tile" style="left:696px;top:228px"><div class="mic"></div><svg class="mi" style="left:68px;top:9px" width="16" height="16" viewBox="0 0 16 16"><use href="#micoff"/></svg>
  <div class="av" style="background:#4a3a30"><svg width="28.8" height="28.8" viewBox="0 0 30 30" style="left:0;top:0"><rect width="30" height="30" fill="#4c3b30"/><path d="M0 4 H12 V18 H0Z" fill="#66579a"/><path d="M0 0 H30 V6 H0Z" fill="#2c2428"/><rect x="22" y="4" width="8" height="26" fill="#b08a6e"/><rect x="26" y="6" width="4" height="20" fill="#d9b9a8"/><rect x="0" y="19" width="12" height="11" fill="#5d4636"/><path d="M12 30 C11.5 20 13 12 15.5 12 C18 12 19.5 20 19 30Z" fill="#d9c3a6"/><circle cx="15.5" cy="8.8" r="2.8" fill="#d8b49c"/><path d="M12.4 10 C12 4 19 4 18.6 10 L19 15 C18 11 13 11 12 15Z" fill="#5a3c28"/></svg></div>
  <div class="nm">Olena Ovchar...</div></div>
<div class="tile" style="left:797px;top:228px"><div class="mic"></div><svg class="mi" style="left:68px;top:9px" width="16" height="16" viewBox="0 0 16 16"><use href="#micoff"/></svg>
  <div class="av" style="background:#e4e4e4"><svg width="28.8" height="28.8" viewBox="0 0 30 30" style="left:0;top:0"><rect width="30" height="30" fill="#e6e6e6"/><path d="M11 8 C10 2 20 1 20 7 C21 4 14 3 11 8Z" fill="#3a3a3a"/><circle cx="15.5" cy="7.5" r="3.6" fill="#f4f4f4" stroke="#444" stroke-width=".8"/><path d="M10 30 C8.5 22 10.5 14 15 13.5 C19.5 14 21.5 20 20 30" fill="#f3f3f3" stroke="#333" stroke-width=".9"/><rect x="9.5" y="13.6" width="10.5" height="2.8" fill="#151515"/><path d="M20 16 L25 12 L26 14 L21 19" fill="#f0f0f0" stroke="#333" stroke-width=".8"/><path d="M13 20 C14 23 14 26 13 29 M17 20 C17.5 24 17 27 17.5 29" stroke="#555" stroke-width=".6" fill="none"/></svg></div>
  <div class="nm">Оксана Клєщ...</div></div>
<!-- row 3 -->
<div class="tile" style="left:494.5px;top:313.5px"><div class="mic"></div><svg class="mi" style="left:68px;top:9px" width="16" height="16" viewBox="0 0 16 16"><use href="#micoff"/></svg>
  <div class="av" style="background:#f1efee"><svg width="28.8" height="28.8" viewBox="0 0 30 30" style="left:0;top:0"><rect width="30" height="30" fill="#f3f1f0"/><path d="M2 30 C0 10 8 1 16 2 C25 3 29 12 26 30Z" fill="#17151a"/><ellipse cx="16" cy="14" rx="6.5" ry="8" fill="#f2e6e0"/><path d="M9 12 C10 4 22 4 23 13 C20 8 13 7 9 12Z" fill="#17151a"/><path d="M12.5 13 H15 M18 13 H20.5" stroke="#2a2228" stroke-width="1"/><path d="M15 18.5 H18" stroke="#b25a62" stroke-width="1"/><path d="M4 30 C8 23 22 23 26 30Z" fill="#f7f5f4"/></svg></div>
  <div class="nm">Valeria Makare...</div></div>
<div class="tile" style="left:595px;top:313.5px"><div class="mic"></div><svg class="mi" style="left:68px;top:9px" width="16" height="16" viewBox="0 0 16 16"><use href="#micoff"/></svg>
  <div class="av" style="background:#d84315;color:#fff;font-size:13.5px;line-height:28.8px;text-align:center">О</div>
  <div class="nm">Олена Волод...</div></div>
<div class="tile" style="left:696px;top:313.5px">
  <div class="a" style="left:30px;top:21.4px;width:16.8px;height:16.8px;border-radius:50%;overflow:hidden;background:#f1efee"><svg width="16.8" height="16.8" viewBox="0 0 17 17" style="left:0;top:0"><rect width="17" height="17" fill="#f3f1ef"/><path d="M2.5 17 C3 11.5 5.5 9 9 9 C12.5 9 14 12 14.5 17Z" fill="#17161a"/><circle cx="8.8" cy="6.4" r="2.7" fill="#dcae98"/><path d="M5.6 8.6 C4.8 2 12.8 2 12 8.6 C11.4 5 6.4 5 5.6 8.6Z" fill="#5a2f22"/><path d="M7.6 9.5 L8.8 12 L10 9.5Z" fill="#e9d9d0"/></svg></div>
  <div class="a" style="left:47.4px;top:21.4px;width:16.8px;height:16.8px;border-radius:50%;overflow:hidden;background:#8d8d8d"><svg width="16.8" height="16.8" viewBox="0 0 17 17" style="left:0;top:0"><rect width="17" height="17" fill="#9a9a9a"/><rect x="0" y="0" width="5" height="17" fill="#777"/><rect x="12" y="0" width="5" height="17" fill="#808080"/><circle cx="8.5" cy="6.6" r="3" fill="#d2d2d2"/><path d="M3 17 C3 12 5.5 10 8.5 10 C11.5 10 14 12 14 17Z" fill="#c4c4c4"/><path d="M5 8 C4.6 2 12.4 2 12 8 C11 4.8 6 4.8 5 8Z" fill="#6a6a6a"/></svg></div>
  <div class="nm" style="left:17.5px;top:46px">Ще 23 особи</div></div>
<div class="tile" style="left:797px;top:313.5px;background:#3b3e42">
  <svg style="left:0;top:11.4px" width="93" height="53.2" viewBox="0 0 93 53.2"><defs><filter id="bl2"><feGaussianBlur stdDeviation="1"/></filter><clipPath id="cp2"><rect width="93" height="53.2"/></clipPath></defs><g clip-path="url(#cp2)"><rect width="93" height="53.2" fill="#e4e4e2"/><g filter="url(#bl2)"><rect x="-3" y="-3" width="27" height="60" fill="#676a64"/><rect x="-3" y="34" width="28" height="24" fill="#3f413f"/><rect x="24" y="-3" width="10" height="60" fill="#c4c7c3"/><rect x="66" y="-3" width="30" height="60" fill="#f0f0ee"/><path d="M24 56 C28 42 34 28 38 14 C40 3 46 -3 54 -3 C63 -3 68 3 69.5 14 C71 30 73 44 78 56Z" fill="#3f2d23"/><ellipse cx="54" cy="24.5" rx="11.3" ry="15.5" fill="#cf9f86"/><path d="M43 24 C45 34 50 40 54 40 C49 37 45 32 43 24Z" fill="#b98a73"/><path d="M42 22 C42 4 66 4 66 22 C63 11 58 8 55 8 C50 8 45 12 42 22Z" fill="#3a281f"/><path d="M47 22 H52.2 M56.4 22 H61.4" stroke="#4a342b" stroke-width="1.6"/><path d="M52.6 28 L52 30.4 H55" stroke="#b58772" stroke-width=".9" fill="none"/><path d="M51 34 H57.5" stroke="#9c5d57" stroke-width="1.5"/><path d="M20 56 C24 44 36 40 46 41 C52 44 58 44 62 41 C72 40 82 46 86 56Z" fill="#8e8c7a"/><circle cx="30" cy="47" r="3" fill="#e6e0d0"/><circle cx="38" cy="50" r="2.5" fill="#3b3a33"/><circle cx="72" cy="47" r="3" fill="#e6e0d0"/><circle cx="66" cy="51" r="2.4" fill="#4a4840"/><circle cx="46" cy="48" r="2.2" fill="#d9cbb6"/></g></g></svg>
  <div class="a" style="left:67.5px;top:9px;width:16.5px;height:16.5px;border-radius:50%;background:rgba(150,150,150,.75)"></div><svg class="mi" style="left:67.7px;top:9.2px;opacity:.55" width="16" height="16" viewBox="0 0 16 16"><use href="#micoff"/></svg>
  <div class="nm" style="left:10.4px;top:58px;text-shadow:0 0 2px rgba(0,0,0,.7)">Рада молодих...</div></div>
<!--TILES-END-->
<!--BOTTOM-BEGIN-->
<div class="a" style="left:16px;top:447px;font-size:10.1px;line-height:14px;color:#e8eaed;font-weight:bold;white-space:nowrap;letter-spacing:-.1px" id="clk">12:45</div>
<div class="a" style="left:49.3px;top:448px;width:1px;height:11.5px;background:#777b81"></div>
<div class="a" style="left:58px;top:447px;font-size:10.9px;line-height:14px;color:#e8eaed;font-weight:bold;white-space:nowrap" id="code">hrv-nuux-qom</div>
<!-- mic group -->
<div class="a" style="left:294.2px;top:439.8px;width:44.4px;height:26.2px;border-radius:13.1px;background:#2f3134"></div>
<div class="a" style="left:312px;top:439.6px;width:26.6px;height:26.6px;border-radius:50%;background:#ea4335"></div>
<svg style="left:300.5px;top:450px" width="8" height="6" viewBox="0 0 8 6"><path d="M1 4.6 L4 1.6 L7 4.6" fill="none" stroke="#c4c7c5" stroke-width="1.5"/></svg>
<svg style="left:317.3px;top:444.9px" width="16" height="16" viewBox="0 0 16 16"><path d="M8 2.6 C7 2.6 6.4 3.3 6.4 4.2 V7.8 C6.4 8.7 7 9.4 8 9.4 C9 9.4 9.6 8.7 9.6 7.8 V4.2 C9.6 3.3 9 2.6 8 2.6Z" fill="#fff"/><path d="M4.6 7.6 C4.6 9.7 6.1 11 8 11 C9.9 11 11.4 9.7 11.4 7.6 M8 11 V13.2" fill="none" stroke="#fff" stroke-width="1.1"/><path d="M3.6 2.5 L12.6 12.8" stroke="#ea4335" stroke-width="2.6"/><path d="M3.4 3 L12.2 13.2" stroke="#fff" stroke-width="1.1"/></svg>
<!-- camera group -->
<div class="a" style="left:346px;top:439.8px;width:43.6px;height:26.2px;border-radius:13.1px;background:#2f3134"></div>
<div class="a" style="left:363px;top:439.6px;width:26.6px;height:26.6px;border-radius:50%;background:#3c4043"></div>
<svg style="left:352px;top:450px" width="8" height="6" viewBox="0 0 8 6"><path d="M1 4.6 L4 1.6 L7 4.6" fill="none" stroke="#c4c7c5" stroke-width="1.5"/></svg>
<svg style="left:370.3px;top:447.9px" width="12.4" height="10.2" viewBox="0 0 14 12"><rect x="1" y="1.4" width="8.4" height="9.2" rx="1" fill="none" stroke="#fff" stroke-width="1.7"/><path d="M9.6 5 L13 2.2 V9.8 L9.6 7Z" fill="#fff"/></svg>
<!-- CC -->
<div class="btn" style="left:397px;top:439.6px;width:26.6px;height:26.6px"></div>
<svg style="left:403.3px;top:447.3px" width="14" height="11" viewBox="0 0 14 11"><rect x="0.4" y="0.4" width="13.2" height="10.2" rx="1.2" fill="#fff"/><path d="M6.2 3.9 H3.2 V7.1 H6.2 M10.9 3.9 H7.9 V7.1 H10.9" fill="none" stroke="#3c4043" stroke-width="1.45"/></svg>
<!-- emoji -->
<div class="btn" style="left:431.2px;top:439.6px;width:26.6px;height:26.6px"></div>
<svg style="left:437.5px;top:445.9px" width="14" height="14" viewBox="0 0 14 14"><circle cx="7" cy="7" r="5.9" fill="none" stroke="#fff" stroke-width="1.5"/><circle cx="4.8" cy="5.4" r="1" fill="#fff"/><circle cx="9.2" cy="5.4" r="1" fill="#fff"/><path d="M3.7 8 C4.4 11.2 9.6 11.2 10.3 8Z" fill="#fff"/></svg>
<!-- present -->
<div class="btn" style="left:466.1px;top:439.6px;width:26.6px;height:26.6px"></div>
<svg style="left:471.9px;top:447.1px" width="15" height="12" viewBox="0 0 15 12"><rect x="0.8" y="0.8" width="13.4" height="10.4" rx=".8" fill="none" stroke="#fff" stroke-width="1.5"/><path d="M7.5 2.9 L10.4 6 H8.6 V8.6 H6.4 V6 H4.6Z" fill="#fff"/></svg>
<!-- hand -->
<div class="btn" style="left:500.3px;top:439.6px;width:26.6px;height:26.6px"></div>
<svg style="left:506.5px;top:445px" width="13.4" height="16" viewBox="0 0 13.4 16"><path d="M3.9 8 V3.4 M6.3 7.4 V1.9 M8.7 7.4 V2.5 M11.1 8.4 V4.4" stroke="#fff" stroke-width="2.1" stroke-linecap="round"/><path d="M2.9 7 H12.15 V10 C12.15 13.4 10.2 15.2 7.6 15.2 C5.2 15.2 4 14 2.6 11.6 L0.8 8.6 C1.8 7.6 2.8 8.2 3.6 9.4Z" fill="#fff"/><path d="M4.6 8.6 H10.6 V10.2 C10.6 12.4 9.4 13.6 7.6 13.6 C6 13.6 5.2 12.8 4.4 11.4Z" fill="#3c4043"/><path d="M5.1 7.8 V4 M7.5 7.4 V3 M9.9 7.8 V4.2" stroke="#3c4043" stroke-width=".55"/></svg>
<!-- more -->
<div class="btn" style="left:534.5px;top:439.6px;width:26.6px;height:26.6px"></div>
<svg style="left:545.8px;top:446.3px" width="4" height="14" viewBox="0 0 4 14"><circle cx="2" cy="2.9" r="1.45" fill="#fff"/><circle cx="2" cy="7" r="1.45" fill="#fff"/><circle cx="2" cy="11.1" r="1.45" fill="#fff"/></svg>
<!-- hangup -->
<div class="a" style="left:568.6px;top:439.9px;width:37.4px;height:26px;border-radius:13px;background:#ea4335"></div>
<svg style="left:579.3px;top:449px" width="16" height="8" viewBox="0 0 16 8"><path d="M0.6 5.2 C3.6 0.6 12.4 0.6 15.4 5.2 L13.4 7.2 C12.6 6.8 11.8 6.2 11 5.6 V3.6 C9 2.8 7 2.8 5 3.6 V5.6 C4.2 6.2 3.4 6.8 2.6 7.2Z" fill="#fff"/></svg>
<!-- right icons -->
<svg style="left:742.8px;top:446.1px" width="14" height="14" viewBox="0 0 14 14"><circle cx="7" cy="7" r="5.8" fill="none" stroke="#fff" stroke-width="1.8"/><path d="M7 6.2 V10.2" stroke="#fff" stroke-width="1.8"/><circle cx="7" cy="4.1" r=".95" fill="#fff"/></svg>
<svg style="left:773px;top:446.5px" width="17" height="13" viewBox="0 0 17 13"><circle cx="6.4" cy="3.6" r="2.3" fill="none" stroke="#fff" stroke-width="1.75"/><path d="M1.2 11.6 C1.2 7.4 11.6 7.4 11.6 11.6Z" fill="none" stroke="#fff" stroke-width="1.75" stroke-linejoin="round"/><path d="M10.6 1.4 C13.4 1.4 13.4 5.8 10.6 5.8" fill="none" stroke="#fff" stroke-width="1.75"/><path d="M12.6 7.8 C14.6 8.4 15.8 9.6 15.8 11.6 H14" fill="none" stroke="#fff" stroke-width="1.75"/></svg>
<div class="a" style="left:782.5px;top:433.3px;width:17.8px;height:9.6px;border-radius:4.8px;background:#5f6368;color:#e8eaed;font-size:7.5px;font-weight:bold;line-height:9.8px;text-align:center">35</div>
<svg style="left:805.5px;top:446.5px" width="15" height="14" viewBox="0 0 15 14"><path d="M0.9 0.9 H14.1 V10.3 H3.6 L0.9 13 Z" fill="none" stroke="#fff" stroke-width="1.75" stroke-linejoin="round"/><path d="M3.4 3.8 H11.6 M3.4 5.8 H11.6 M3.4 7.8 H9" stroke="#fff" stroke-width="1.1"/></svg>
<svg style="left:837.5px;top:446px" width="15" height="14" viewBox="0 0 15 14"><path d="M7.5 1 L10.7 6 H4.3Z" fill="none" stroke="#fff" stroke-width="1.75" stroke-linejoin="round"/><rect x="1.6" y="8.4" width="4.6" height="4.6" fill="none" stroke="#fff" stroke-width="1.75"/><circle cx="11.2" cy="10.7" r="2.4" fill="none" stroke="#fff" stroke-width="1.75"/></svg>
<svg style="left:869.5px;top:445px" width="15" height="16" viewBox="0 0 15 16"><path d="M3.6 6 V4 C3.6 0.6 9.4 0.6 9.4 4 V6" fill="none" stroke="#fff" stroke-width="1.75"/><path d="M11.2 8 V6.2 H1.6 V14 H7" fill="none" stroke="#fff" stroke-width="1.75" stroke-linejoin="round"/><circle cx="10.8" cy="11.8" r="3" fill="#fff"/><path d="M10.8 10 V12 L12 12.8" stroke="#202124" stroke-width=".8" fill="none"/></svg>
<!--BOTTOM-END-->
<div class="a" id="taskbar"></div>
<!--TASK-BEGIN-->
<div class="a" style="left:65.3px;top:478px;width:31.2px;height:28px;background:#434950"></div>
<div class="a" style="left:65.3px;top:504.2px;width:31.2px;height:1.8px;background:#9fc3e8"></div>
<div class="a" style="left:100px;top:504.2px;width:26px;height:1.8px;background:#86a9cc"></div>
<div class="a" style="left:132px;top:504.2px;width:26.7px;height:1.8px;background:#86a9cc"></div>
<div class="a" style="left:164px;top:504.2px;width:26.7px;height:1.8px;background:#86a9cc"></div>
<div class="a" style="left:196.8px;top:504.2px;width:26px;height:1.8px;background:#86a9cc"></div>
<svg style="left:10px;top:487.2px" width="12" height="12" viewBox="0 0 12 12" fill="#fff"><rect x="0" y="0.6" width="5.4" height="5"/><rect x="6.2" y="0" width="5.8" height="5.6"/><rect x="0" y="6.4" width="5.4" height="5"/><rect x="6.2" y="6.4" width="5.8" height="5.6"/></svg>
<svg style="left:42px;top:487px" width="12" height="12" viewBox="0 0 12 12"><circle cx="7.4" cy="4.6" r="3.5" fill="none" stroke="#fff" stroke-width="1.3"/><path d="M4.8 7.2 L0.9 11.1" stroke="#fff" stroke-width="1.4"/></svg>
<svg style="left:73.3px;top:484.7px" width="16" height="16" viewBox="0 0 16 16"><circle cx="8" cy="8" r="8" fill="#e33b2e"/><path d="M8 8 L1.07 4 A8 8 0 0 0 8 16Z" fill="#2ba24c"/><path d="M8 8 L8 16 A8 8 0 0 0 14.93 4Z" fill="#fcc31e"/><path d="M8 8 L4 14.9 L8 16Z" fill="#2ba24c"/><circle cx="8" cy="8" r="3.7" fill="#fff"/><circle cx="8" cy="8" r="2.9" fill="#4a8af4"/></svg>
<svg style="left:105.5px;top:486px" width="16" height="14" viewBox="0 0 16 14"><path d="M0.5 1.2 H6 L7.4 2.8 H15.5 V13 H0.5Z" fill="#f3c64a"/><rect x="0.5" y="4.4" width="15" height="8.6" fill="#fbe08a"/><rect x="4" y="9" width="8" height="4" fill="#4aa3e6"/><rect x="5.6" y="10.6" width="4.8" height="2.4" fill="#fbe08a"/></svg>
<svg style="left:137px;top:484px" width="18" height="18" viewBox="0 0 18 18"><circle cx="8" cy="8" r="7.6" fill="#2583d8"/><path d="M2 9 C4 4 11 3 14.6 6.4 C12 5.6 8.6 6.2 7.2 8.4 H13 C13 12 8 14 4.6 11.6 C3.4 10.8 2.6 10 2 9Z" fill="#dff3ff"/><path d="M1 10 C2 15 9 17.4 13.6 13 C10 14.6 5.4 13.4 4 10Z" fill="#1a5fb0"/><circle cx="13.3" cy="13.2" r="4.2" fill="#1d2024"/><text x="13.3" y="15.9" font-size="7.6" font-weight="bold" text-anchor="middle" fill="#fff" font-family="Liberation Sans,sans-serif">4</text></svg>
<svg style="left:169px;top:485px" width="17" height="15" viewBox="0 0 17 15"><rect x="4.6" y="0.6" width="12" height="13.8" rx="1" fill="#41a5ee"/><rect x="4.6" y="4" width="12" height="3.6" fill="#2b7cd3"/><rect x="4.6" y="7.6" width="12" height="3.4" fill="#185abd"/><rect x="4.6" y="11" width="12" height="3.4" fill="#103f91"/><rect x="0.4" y="3.2" width="8.6" height="8.6" rx="1" fill="#185abd"/><path d="M2 5.2 L3.2 9.8 L4.7 6 L6.2 9.8 L7.4 5.2" fill="none" stroke="#fff" stroke-width="1"/></svg>
<svg style="left:202px;top:485.5px" width="16" height="14" viewBox="0 0 16 14"><rect x="0.5" y="0.5" width="15" height="13" fill="#2d7fd0"/><rect x="1.6" y="1.6" width="12.8" height="10.8" fill="#a7d4f4"/><path d="M1.6 12.4 L6 6.4 L9 10 L11 8 L14.4 12.4Z" fill="#3f8f5e"/><path d="M1.6 8 C5 6 10 7 14.4 5 V9 H1.6Z" fill="#d8ecf8" opacity=".7"/></svg>
<!-- tray -->
<svg style="left:737.4px;top:489.5px" width="10" height="7" viewBox="0 0 10 7"><path d="M1 5.8 L5 1.6 L9 5.8" fill="none" stroke="#fff" stroke-width="1.2"/></svg>
<svg style="left:752.8px;top:489px" width="11.2" height="7.8" viewBox="0 0 13 9"><rect x="2" y="2.2" width="9.4" height="5.6" fill="none" stroke="#fff" stroke-width="1"/><rect x="3.2" y="3.4" width="7" height="3.2" fill="#fff"/><rect x="11.6" y="3.8" width="1.2" height="2.4" fill="#fff"/><path d="M0.8 0.8 V4.2 M2.6 0.8 V2" stroke="#fff" stroke-width=".9"/></svg>
<svg style="left:768.5px;top:488px" width="12" height="11" viewBox="0 0 12 11"><path d="M1.2 10 C1.2 5 5 1.2 10.4 1.2" fill="none" stroke="#fff" stroke-width="1"/><path d="M4 10 C4 6.8 6.6 4 10.4 4" fill="none" stroke="#fff" stroke-width="1"/><path d="M6.8 10 C6.8 8.2 8.2 6.8 10.4 6.8" fill="none" stroke="#fff" stroke-width="1"/><rect x="8.8" y="8.6" width="1.8" height="1.6" fill="#fff"/></svg>
<svg style="left:784px;top:488px" width="13" height="10" viewBox="0 0 13 10"><path d="M0.8 3.4 H2.8 L5.4 1 V9 L2.8 6.6 H0.8Z" fill="none" stroke="#fff" stroke-width=".9" stroke-linejoin="round"/><path d="M7 3.2 C8 4.2 8 5.8 7 6.8 M8.6 1.8 C10.4 3.6 10.4 6.4 8.6 8.2 M10.2 0.6 C12.8 3 12.8 7 10.2 9.4" fill="none" stroke="#fff" stroke-width=".85"/></svg>
<div class="a" style="left:802px;top:488.5px;font-size:7.3px;letter-spacing:-.2px;line-height:9px;color:#fff;white-space:nowrap" id="eng">ENG</div>
<div class="a" style="left:823px;top:482.2px;width:41px;text-align:center;font-size:7.6px;letter-spacing:-.25px;line-height:9px;color:#fff;white-space:nowrap" id="tclk">12:45</div>
<div class="a" style="left:823px;top:494px;width:41px;text-align:center;font-size:7.6px;letter-spacing:-.25px;line-height:9px;color:#fff;white-space:nowrap" id="tdate">26.04.2024</div>
<svg style="left:873px;top:487.5px" width="12" height="12" viewBox="0 0 12 12"><path d="M0.8 0.8 H11.2 V8.4 H7.6 L6 10.4 L4.4 8.4 H0.8Z" fill="none" stroke="#fff" stroke-width="1" stroke-linejoin="round"/></svg>
<div class="a" style="left:896.5px;top:480px;width:1px;height:26px;background:#6a7078"></div>
<!--TASK-END-->
</body>
</html>
